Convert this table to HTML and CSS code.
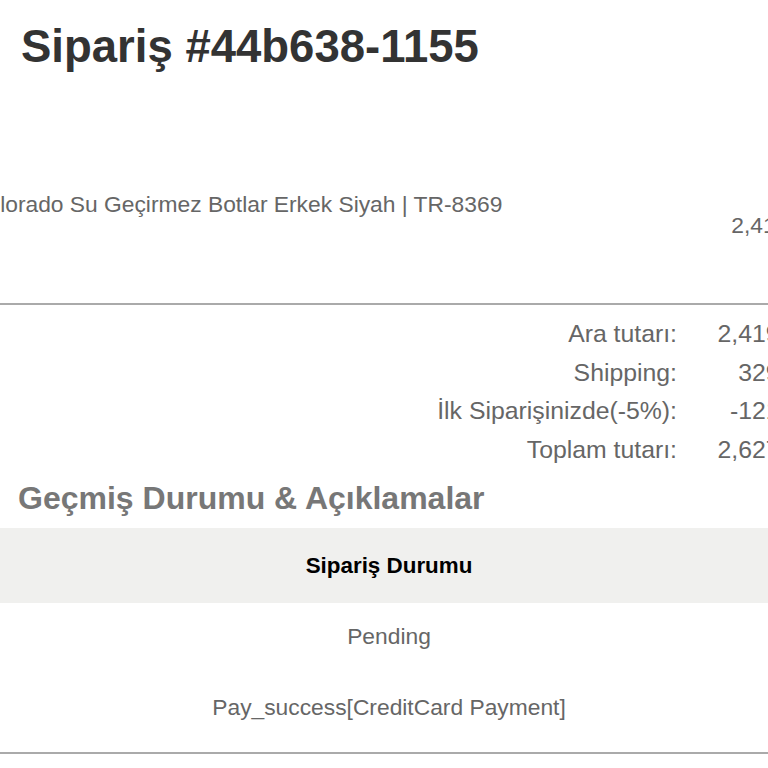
FILE: index.html
```html
<!DOCTYPE html>
<html lang="tr">
<head>
<meta charset="utf-8">
<title>Sipariş #44b638-1155</title>
<link rel="stylesheet" href="styles.css">
</head>
<body>
<div class="page">
  <h1 class="order-title">Sipariş #44b638-1155</h1>

  <div class="product-row">
    <div class="product-name">Colorado Su Geçirmez Botlar Erkek Siyah | TR-8369</div>
    <div class="product-price">2,419.90</div>
  </div>

  <div class="summary">
    <div class="summary-label">Ara tutarı:</div>
    <div class="summary-value">2,419.90</div>
    <div class="summary-label">Shipping:</div>
    <div class="summary-value">329.00</div>
    <div class="summary-label">İlk Siparişinizde(-5%):</div>
    <div class="summary-value">-121.00</div>
    <div class="summary-label">Toplam tutarı:</div>
    <div class="summary-value">2,627.90</div>
  </div>

  <h2 class="section-title">Geçmiş Durumu &amp; Açıklamalar</h2>

  <div class="history">
    <table class="history-table">
      <thead>
        <tr><th>Sipariş Durumu</th></tr>
      </thead>
      <tbody>
        <tr><td>Pending</td></tr>
        <tr><td>Pay_success[CreditCard Payment]</td></tr>
      </tbody>
    </table>
  </div>
</div>
</body>
</html>
```

FILE: styles.css
```css
html, body {
  margin: 0;
  padding: 0;
  background: #ffffff;
}

body {
  font-family: "Liberation Sans", Arial, sans-serif;
  overflow: hidden;
  width: 768px;
  height: 768px;
}

.page {
  width: 814px;
}

.order-title {
  margin: 0;
  padding: 20px 0 0 21px;
  font-size: 45.5px;
  line-height: 53px;
  font-weight: bold;
  color: #333333;
}

.product-row {
  display: flex;
  justify-content: space-between;
  align-items: flex-start;
  margin: 118px -6px 0 -29px;
  padding-bottom: 65px;
  border-bottom: 2px solid #aaaaaa;
  font-size: 22.8px;
  line-height: 26px;
  color: #666666;
}

.product-price {
  padding-top: 21px;
  width: 89px;
  text-align: right;
}

.summary {
  display: grid;
  grid-template-columns: 1fr 97px;
  column-gap: 40px;
  padding-top: 10px;
  font-size: 24.8px;
  line-height: 38.5px;
  color: #666666;
}

.summary-label,
.summary-value {
  text-align: right;
  white-space: nowrap;
}

.section-title {
  margin: 11px 0 12px 0;
  padding-left: 18px;
  font-size: 32px;
  line-height: 36px;
  font-weight: bold;
  color: #777777;
}

.history {
  width: 778px;
  padding-bottom: 7px;
  border-bottom: 2px solid #aaaaaa;
}

.history-table {
  width: 778px;
  border-collapse: collapse;
  border-spacing: 0;
}

.history-table th {
  height: 75px;
  padding: 0;
  background: #f0f0ee;
  font-size: 22.4px;
  line-height: 26px;
  font-weight: bold;
  color: #000000;
  text-align: center;
  vertical-align: middle;
}

.history-table td {
  padding: 20px 0 25px;
  font-size: 22.8px;
  line-height: 26px;
  color: #666666;
  text-align: center;
}
```
